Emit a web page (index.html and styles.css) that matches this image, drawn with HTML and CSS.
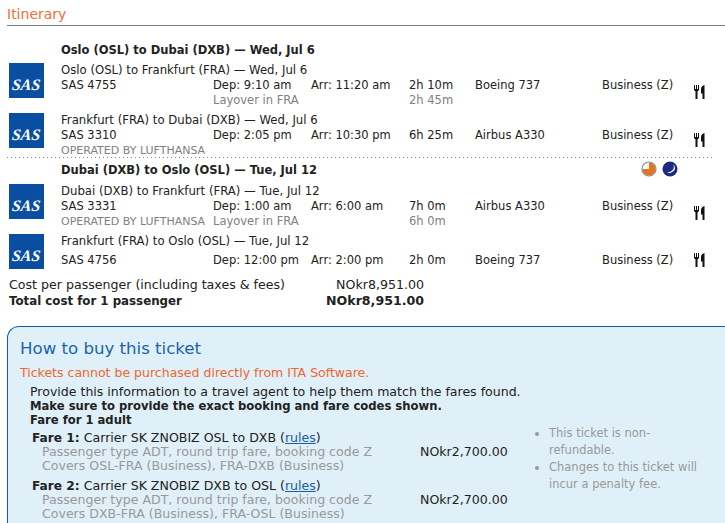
FILE: index.html
```html
<!DOCTYPE html>
<html lang="en">
  <head>
    <meta name="viewport" content="width=device-width, initial-scale=1.0" />
    <title>Itinerary</title>
    <link rel="stylesheet" href="styles.css">
  </head>
  <body>
    <svg class="defs" width="0" height="0">
      <symbol id="meal" viewBox="0 0 11 14">
        <path d="M0 0h1v4h1V0h1v4h1V0h1v5L3.500 6.500V14h-2V6.500L0 5z" fill="#111" />
        <path d="M10.500 0v14h-2V8.500H7V4C7 2 8.500 .5 10.500 0z" fill="#111" />
      </symbol>
    </svg>

    <h2 class="section-title">Itinerary</h2>

    <div class="slice first">
      <div class="slice-head"><b>Oslo (OSL) to Dubai (DXB) &mdash; Wed, Jul 6</b></div>
      <div class="seg">
        <div class="logo"><span>SAS</span></div>
        <div class="route">Oslo (OSL) to Frankfurt (FRA) &mdash; Wed, Jul 6</div>
        <div class="flight">SAS 4755</div>
        <div>Dep: 9:10 am</div>
        <div>Arr: 11:20 am</div>
        <div>2h 10m</div>
        <div>Boeing 737</div>
        <div>Business (Z)</div>
        <svg class="meal"><use href="#meal" /></svg>
        <div class="note layover">Layover in FRA</div>
        <div class="note lay-time">2h 45m</div>
      </div>
      <div class="seg">
        <div class="logo"><span>SAS</span></div>
        <div class="route">Frankfurt (FRA) to Dubai (DXB) &mdash; Wed, Jul 6</div>
        <div class="flight">SAS 3310</div>
        <div>Dep: 2:05 pm</div>
        <div>Arr: 10:30 pm</div>
        <div>6h 25m</div>
        <div>Airbus A330</div>
        <div>Business (Z)</div>
        <svg class="meal"><use href="#meal" /></svg>
        <div class="operated">OPERATED BY LUFTHANSA</div>
      </div>
    </div>

    <div class="slice second">
      <div class="slice-head">
        <b>Dubai (DXB) to Oslo (OSL) &mdash; Tue, Jul 12</b>
        <span class="times">
          <svg width="16" height="16" viewBox="0 0 16 16">
            <circle cx="8" cy="8" r="7" fill="#fff" stroke="#8a8a8a" stroke-width="1.200" />
            <path d="M8 1.500a6.500 6.500 0 1 1-6.500 6.500H8z" fill="#e5731c" />
          </svg>
          <svg width="16" height="16" viewBox="0 0 16 16">
            <circle cx="8" cy="8" r="7.500" fill="#1c2a80" />
            <path d="M11 3a5.500 5.500 0 0 1-7.500 7.500a6 6 0 0 0 9.500-2.500a6 6 0 0 0-2-5z" fill="#fff" />
          </svg>
        </span>
      </div>
      <div class="seg">
        <div class="logo"><span>SAS</span></div>
        <div class="route">Dubai (DXB) to Frankfurt (FRA) &mdash; Tue, Jul 12</div>
        <div class="flight">SAS 3331</div>
        <div>Dep: 1:00 am</div>
        <div>Arr: 6:00 am</div>
        <div>7h 0m</div>
        <div>Airbus A330</div>
        <div>Business (Z)</div>
        <svg class="meal"><use href="#meal" /></svg>
        <div class="operated">OPERATED BY LUFTHANSA</div>
        <div class="note layover">Layover in FRA</div>
        <div class="note lay-time">6h 0m</div>
      </div>
      <div class="seg tall">
        <div class="logo"><span>SAS</span></div>
        <div class="route">Frankfurt (FRA) to Oslo (OSL) &mdash; Tue, Jul 12</div>
        <div class="flight">SAS 4756</div>
        <div>Dep: 12:00 pm</div>
        <div>Arr: 2:00 pm</div>
        <div>2h 0m</div>
        <div>Boeing 737</div>
        <div>Business (Z)</div>
        <svg class="meal"><use href="#meal" /></svg>
      </div>
    </div>

    <div class="costs">
      <div>Cost per passenger (including taxes &amp; fees)</div>
      <div class="amount">NOkr8,951.00</div>
      <b class="cost-label">Total cost for 1 passenger</b>
      <b class="amount">NOkr8,951.00</b>
    </div>

    <div class="buy-box">
      <h2 class="buy-title">How to buy this ticket</h2>
      <p class="warning">Tickets cannot be purchased directly from ITA Software.</p>
      <div class="instructions">
        <div>Provide this information to a travel agent to help them match the fares found.</div>
        <b>Make sure to provide the exact booking and fare codes shown.</b>
        <b>Fare for 1 adult</b>
      </div>
      <div class="fare-area">
        <div class="fares">
          <div class="fare">
            <div class="fare-name"><b>Fare 1:</b> Carrier SK ZNOBIZ OSL to DXB (<a href="#">rules</a>)</div>
            <div class="fare-info">Passenger type ADT, round trip fare, booking code Z</div>
            <div class="fare-price">NOkr2,700.00</div>
            <div class="fare-info">Covers OSL-FRA (Business), FRA-DXB (Business)</div>
          </div>
          <div class="fare">
            <div class="fare-name"><b>Fare 2:</b> Carrier SK ZNOBIZ DXB to OSL (<a href="#">rules</a>)</div>
            <div class="fare-info">Passenger type ADT, round trip fare, booking code Z</div>
            <div class="fare-price">NOkr2,700.00</div>
            <div class="fare-info">Covers DXB-FRA (Business), FRA-OSL (Business)</div>
          </div>
        </div>
        <ul class="rules-list">
          <li>This ticket is non-refundable.</li>
          <li>Changes to this ticket will incur a penalty fee.</li>
        </ul>
      </div>
    </div>
  </body>
</html>
```

FILE: styles.css
```css
* {
  padding: 0;
  margin: 0;
  box-sizing: border-box;
}
html,
body {
  height: 523px;
  overflow: hidden;
}
body {
  background-color: #ffffff;
  color: #222222;
  font-family: "DejaVu Sans", Verdana, sans-serif;
  font-size: 11.5px;
  line-height: 15px;
}
.defs {
  position: absolute;
}
.section-title {
  margin: 6px 0 0 7px;
  height: 20px;
  border-bottom: 1px solid #808080;
  color: #f0703a;
  font-size: 14px;
  font-weight: normal;
  line-height: 17px;
}
.slice.first {
  margin: 17px 13px 0 7px;
  height: 115px;
  background-image: linear-gradient(to right, #8a8a8a 1px, transparent 1px);
  background-position: left bottom;
  background-repeat: repeat-x;
  background-size: 4px 1px;
}
.slice.second {
  margin: 5px 13px 0 7px;
}
.slice-head {
  position: relative;
  height: 21px;
  padding-left: 54px;
}
.first .slice-head {
  height: 20px;
}
.times {
  position: absolute;
  top: -2px;
  left: 634px;
  display: flex;
  gap: 5px;
}
.seg {
  display: grid;
  grid-template-columns: 54px 152px 98px 98px 66px 127px 92px 1fr;
  grid-template-rows: 15px 15px 15px;
  height: 50px;
}
.seg.tall {
  grid-template-rows: 15px 19px;
}
.logo {
  grid-row: 1 / 4;
  width: 35px;
  height: 35px;
  margin-left: 2px;
  background-color: #0a4ea2;
  color: #ffffff;
  font-family: "Liberation Serif", serif;
  font-size: 16px;
  font-style: italic;
  font-weight: bold;
  line-height: 44px;
  text-align: center;
}
.logo span {
  display: inline-block;
  transform: skewX(-6deg);
}
.route {
  grid-column: 2 / 9;
  font-size: 11.700px;
}
.seg.tall .flight,
.seg.tall .flight ~ div {
  align-self: end;
}
.meal {
  width: 11px;
  height: 14px;
  margin-top: 7px;
}
.first .seg + .seg .meal {
  margin-top: 5px;
}
.seg.tall .meal {
  margin: 4px 0 0;
}
.note,
.operated {
  color: #808080;
}
.operated {
  grid-column: 2;
  grid-row: 3;
  font-size: 11px;
  white-space: nowrap;
}
.layover {
  grid-column: 3;
  grid-row: 3;
}
.lay-time {
  grid-column: 5;
  grid-row: 3;
}
.costs {
  display: grid;
  grid-template-columns: 278px 137px;
  margin: -7px 0 0 9px;
  line-height: 16px;
  font-size: 12.600px;
}
.cost-label {
  font-size: 11.800px;
}
.amount {
  text-align: right;
}
.buy-box {
  margin: 17px 0 0 7px;
  padding: 12px 0 0 12px;
  height: 197px;
  overflow: hidden;
  border: 1px solid #0a5fae;
  border-right: 0;
  border-bottom: 0;
  border-radius: 12px 0 0 0;
  background-color: #dff0f8;
}
.buy-title {
  color: #1a64ad;
  font-size: 16.600px;
  font-weight: normal;
  line-height: 20px;
}
.warning {
  margin-top: 6px;
  color: #f0662e;
  font-size: 12.530px;
}
.instructions {
  display: flex;
  flex-direction: column;
  margin: 5px 0 0 10px;
  line-height: 14px;
  font-size: 12.550px;
}
.instructions b {
  font-size: 11.600px;
}
.fare-area {
  display: flex;
}
.fares {
  flex: none;
  width: 506px;
  margin: 4px 0 0 12px;
  font-size: 12.570px;
}
.fare {
  display: grid;
  grid-template-columns: 388px 1fr;
  margin-bottom: 6px;
  line-height: 14px;
}
.fare-name {
  grid-column: 1 / 3;
}
.fare-name b {
  font-size: 12.200px;
}
.fare-info {
  padding-left: 10px;
  color: #999999;
}
.fare-price {
  color: #222222;
}
a {
  color: #1a5ca8;
}
.rules-list {
  flex: none;
  width: 170px;
  margin: -2px 0 0 0;
  padding-left: 11px;
  color: #999999;
  font-size: 11.500px;
  line-height: 17px;
}
```
